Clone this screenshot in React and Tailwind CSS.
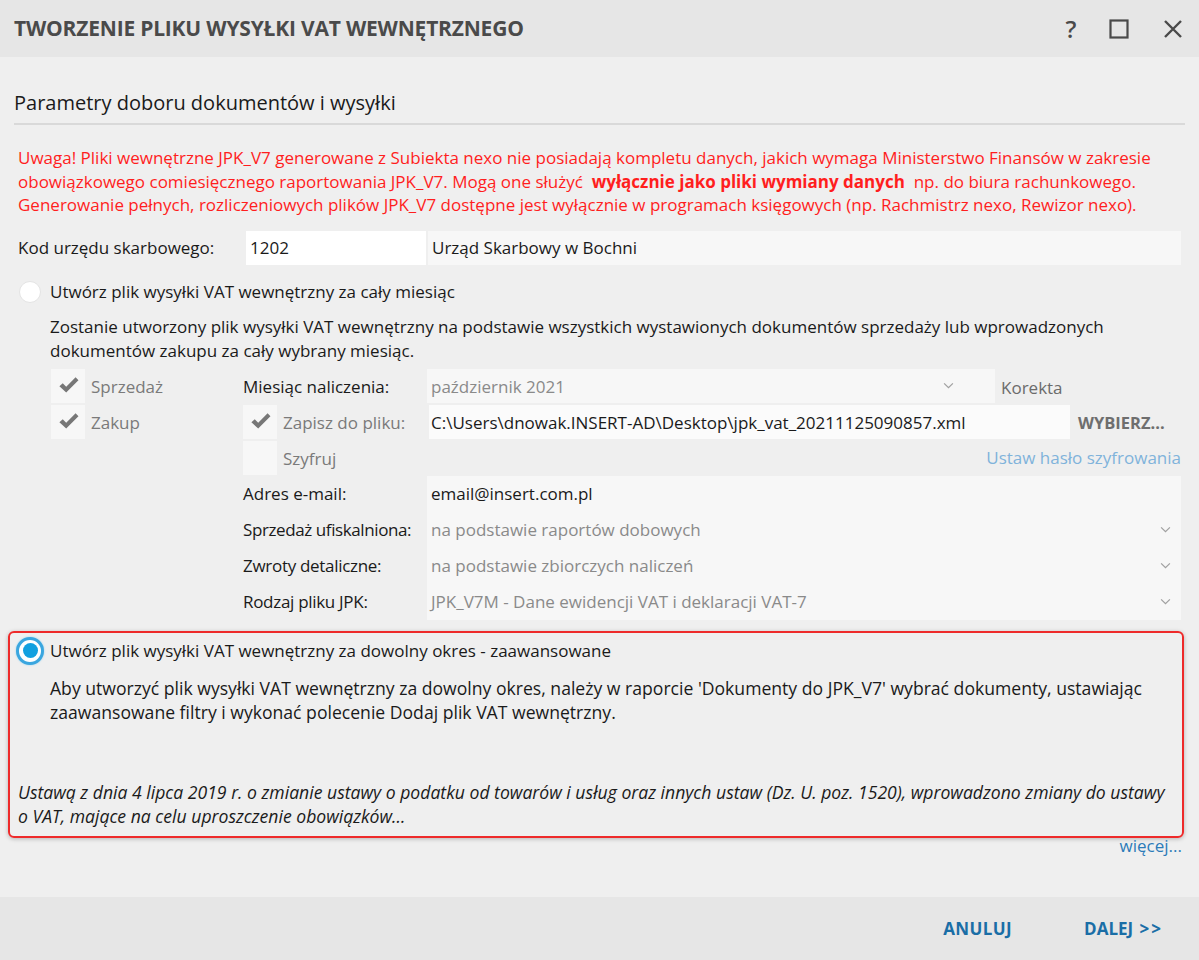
import React from "react";

const FONT = "font-['Open_Sans','Noto_Sans',sans-serif]";

function Check({ className = "" }) {
  return (
    <svg viewBox="0 0 24 24" className={className} fill="currentColor">
      <path d="M2.5 12.8 L6 9.6 L9.6 13.2 L19.4 3.4 L22.4 6.4 L9.6 19.4 Z" />
    </svg>
  );
}

function Chevron() {
  return (
    <svg viewBox="0 0 12 8" className="h-[7px] w-[11px]" fill="none" stroke="#a0a0a0" strokeWidth="1.4">
      <path d="M1 1.5 L6 6.5 L11 1.5" />
    </svg>
  );
}

function CheckBox({ checked, label }) {
  return (
    <div className="flex items-center">
      <div className="flex h-[34px] w-[34px] items-center justify-center bg-[#f7f7f7]">
        {checked && <Check className="h-[23px] w-[23px] text-[#777777]" />}
      </div>
      {label && <span className="ml-[6px] pt-[2px] text-[#7a7a7a]">{label}</span>}
    </div>
  );
}

function Field({ children, muted, chevron, className = "" }) {
  return (
    <div className={`flex h-[36px] items-center justify-between bg-[#f7f7f7] pl-[4px] pr-[10px] ${muted ? "text-[#8a8a8a]" : "text-[#1a1a1a]"} ${className}`}>
      <span>{children}</span>
      {chevron && <Chevron />}
    </div>
  );
}

export default function App() {
  return (
    <div className={`flex h-[960px] w-[1199px] flex-col bg-[#efefef] text-[17px] text-[#1a1a1a] ${FONT}`}>
      {/* title bar */}
      <div className="flex h-[57px] shrink-0 items-center justify-between bg-[#e6e6e6] pl-[14px] pr-[16px]">
        <h1 className="text-[21px] font-bold tracking-[-0.2px] text-[#4a4a4a]">
          TWORZENIE PLIKU WYSYŁKI VAT WEWNĘTRZNEGO
        </h1>
        <div className="flex items-center text-[#4a4a4a]">
          <span className="w-[20px] text-center text-[24px] font-semibold leading-none">?</span>
          <svg viewBox="0 0 20 20" className="ml-[28px] h-[20px] w-[20px]" fill="none" stroke="#4a4a4a" strokeWidth="2.2">
            <rect x="1.5" y="1.5" width="17" height="17" />
          </svg>
          <svg viewBox="0 0 20 20" className="ml-[34px] h-[20px] w-[20px]" fill="none" stroke="#4a4a4a" strokeWidth="2.4">
            <path d="M2 2 L18 18 M18 2 L2 18" />
          </svg>
        </div>
      </div>

      {/* body */}
      <div className="flex flex-1 flex-col px-[14px]">
        <div className="mt-[32px] border-b-2 border-[#d9d9d9] pb-[6px] text-[20px] leading-[28px]">
          Parametry doboru dokumentów i wysyłki
        </div>

        <p className="mt-[21px] whitespace-nowrap pl-[4px] text-[17px] leading-[23.5px] text-[#ff1e1e]">
          Uwaga! Pliki wewnętrzne JPK_V7 generowane z Subiekta nexo nie posiadają kompletu danych, jakich wymaga Ministerstwo Finansów w zakresie
          <br />
          obowiązkowego comiesięcznego raportowania JPK_V7. Mogą one służyć&nbsp; <b className="font-bold">wyłącznie jako pliki wymiany danych</b>&nbsp; np. do biura rachunkowego.
          <br />
          Generowanie pełnych, rozliczeniowych plików JPK_V7 dostępne jest wyłącznie w programach księgowych (np. Rachmistrz nexo, Rewizor nexo).
        </p>

        <div className="mt-[14px] flex h-[34px] items-center pl-[4px]">
          <span className="w-[228px]">Kod urzędu skarbowego:</span>
          <div className="flex h-[34px] w-[180px] items-center bg-white pl-[4px]">1202</div>
          <div className="ml-[2px] mr-[4px] flex h-[34px] flex-1 items-center bg-[#f7f7f7] pl-[4px]">Urząd Skarbowy w Bochni</div>
        </div>

        {/* option 1 */}
        <div className="mt-[13px] flex items-center pl-[5px]">
          <span className="h-[22px] w-[22px] rounded-full border border-[#e4e4e4] bg-white" />
          <span className="ml-[9px] leading-[28px]">Utwórz plik wysyłki VAT wewnętrzny za cały miesiąc</span>
        </div>
        <p className="mt-[9px] whitespace-nowrap pl-[36px] text-[17px] leading-[24px]">
          Zostanie utworzony plik wysyłki VAT wewnętrzny na podstawie wszystkich wystawionych dokumentów sprzedaży lub wprowadzonych
          <br />
          dokumentów zakupu za cały wybrany miesiąc.
        </p>

        <div className="mt-[6px] grid grid-cols-[192px_184px_1fr] pl-[37px] pr-[4px]">
          {/* row 1 */}
          <div className="flex h-[36px] items-start">
            <CheckBox checked label="Sprzedaż" />
          </div>
          <div className="flex h-[36px] items-center">Miesiąc naliczenia:</div>
          <div className="flex h-[36px] items-start">
            <div className="flex h-[34px] w-[568px] items-center justify-between bg-[#f7f7f7] pl-[4px] pr-[41px] text-[#8a8a8a]">
              <span className="pt-[2px]">październik 2021</span>
              <Chevron />
            </div>
            <span className="ml-[6px] mt-[6px] text-[#6b6b6b]">Korekta</span>
          </div>

          {/* row 2 */}
          <div className="flex h-[36px] items-start">
            <CheckBox checked label="Zakup" />
          </div>
          <div className="flex h-[36px] items-start">
            <CheckBox checked label="Zapisz do pliku:" />
          </div>
          <div className="flex h-[36px] items-start">
            <div className="ml-[2px] flex h-[34px] w-[641px] items-center bg-[#fbfbfb] pl-[2px]">
              <span className="pt-[2px]">C:\Users\dnowak.INSERT-AD\Desktop\jpk_vat_20211125090857.xml</span>
            </div>
            <span className="ml-[8px] mt-[6px] text-[16.5px] font-bold text-[#6e6e6e]">WYBIERZ...</span>
          </div>

          {/* row 3 */}
          <div className="h-[35px]" />
          <div className="flex h-[35px] items-start">
            <CheckBox label="Szyfruj" />
          </div>
          <div className="flex h-[35px] items-center justify-end text-[#80b3db]">Ustaw hasło szyfrowania</div>

          {/* rows 4-7 */}
          <div />
          <div className="flex h-[36px] items-center">Adres e-mail:</div>
          <Field>email@insert.com.pl</Field>

          <div />
          <div className="flex h-[36px] items-center whitespace-nowrap tracking-[-0.4px]">Sprzedaż ufiskalniona:</div>
          <Field muted chevron>na podstawie raportów dobowych</Field>

          <div />
          <div className="flex h-[36px] items-center tracking-[-0.3px]">Zwroty detaliczne:</div>
          <Field muted chevron>na podstawie zbiorczych naliczeń</Field>

          <div />
          <div className="flex h-[36px] items-center tracking-[-0.3px]">Rodzaj pliku JPK:</div>
          <Field muted chevron>JPK_V7M - Dane ewidencji VAT i deklaracji VAT-7</Field>
        </div>

        {/* option 2, highlighted */}
        <div className="mt-[11px] ml-[-6px] mr-[1px] rounded-[6px] border-2 border-[#ee2a2a] pb-[8px] pl-[6px] pr-[8px] pt-[4px] shadow-[0_1px_4px_rgba(0,0,0,0.25)]">
          <div className="flex items-center">
            <span className="flex h-[28px] w-[28px] items-center justify-center rounded-full border-[3px] border-[#3aa6df] bg-white shadow-[0_0_2px_#8fd0f0]">
              <span className="h-[15px] w-[15px] rounded-full bg-[#11a0e0]" />
            </span>
            <span className="ml-[6px] leading-[28px]">Utwórz plik wysyłki VAT wewnętrzny za dowolny okres - zaawansowane</span>
          </div>
          <p className="mt-[11px] whitespace-nowrap pl-[34px] text-[17.6px] leading-[24px]">
            Aby utworzyć plik wysyłki VAT wewnętrzny za dowolny okres, należy w raporcie 'Dokumenty do JPK_V7' wybrać dokumenty, ustawiając
            <br />
            zaawansowane filtry i wykonać polecenie Dodaj plik VAT wewnętrzny.
          </p>
          <p className="mt-[56px] whitespace-nowrap pl-[2px] text-[17.6px] italic leading-[24px]">
            Ustawą z dnia 4 lipca 2019 r. o zmianie ustawy o podatku od towarów i usług oraz innych ustaw (Dz. U. poz. 1520), wprowadzono zmiany do ustawy
            <br />
            o VAT, mające na celu uproszczenie obowiązków...
          </p>
        </div>
        <div className="mt-[-5px] pr-[3px] text-right text-[#2b7bb9]">więcej...</div>
      </div>

      {/* footer */}
      <div className="flex h-[63px] shrink-0 items-center justify-end bg-[#e6e6e6] pr-[36px]">
        <span className="text-[17px] font-bold tracking-[0.4px] text-[#1a6ea6]">ANULUJ</span>
        <span className="ml-[72px] text-[17px] font-bold text-[#1a6ea6]">
          DALEJ <span className="ml-[2px] tracking-[2px]">&gt;&gt;</span>
        </span>
      </div>
    </div>
  );
}
